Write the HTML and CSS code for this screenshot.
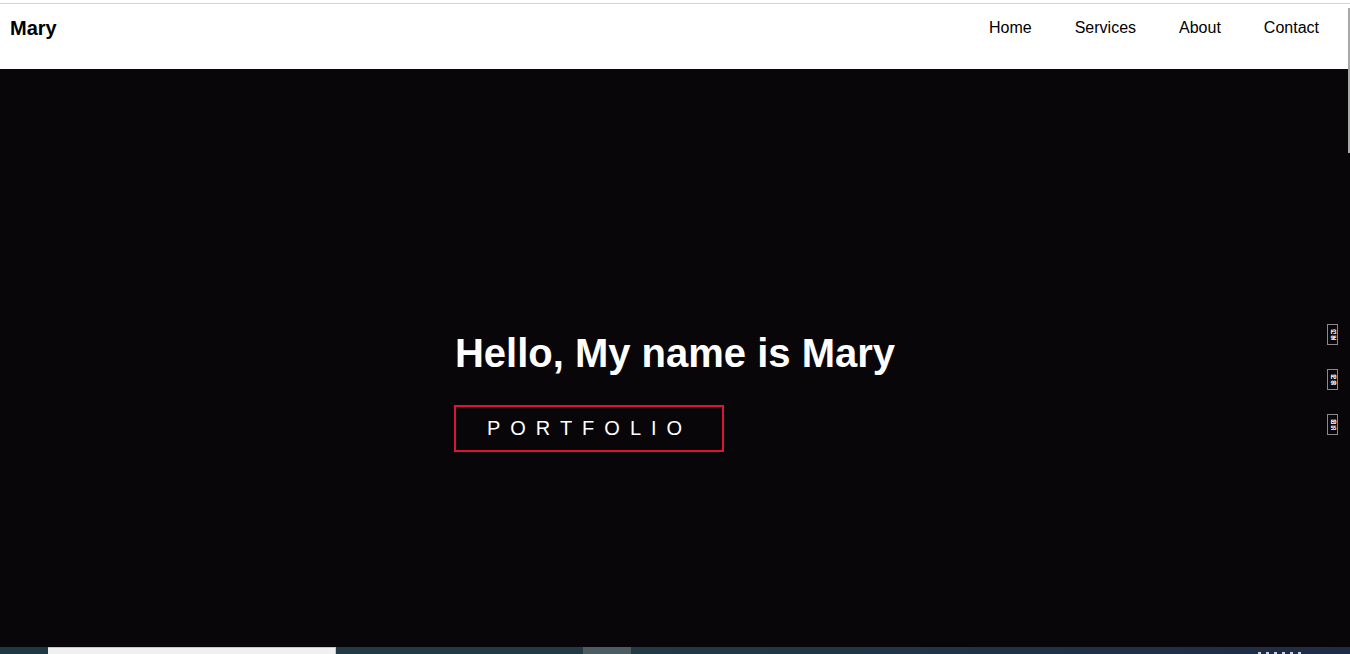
FILE: index.html
```html
<!DOCTYPE html>
<html lang="en">
<head>
<meta charset="utf-8">
<title>Mary</title>
<link rel="stylesheet" href="styles.css">
</head>
<body>
<header class="header">
  <div class="logo">Mary</div>
  <nav class="nav">
    <a href="#" class="nav-link">Home</a>
    <a href="#" class="nav-link">Services</a>
    <a href="#" class="nav-link">About</a>
    <a href="#" class="nav-link">Contact</a>
  </nav>
</header>
<section class="hero">
  <div class="hero-content">
    <h1 class="hero-title">Hello, My name is Mary</h1>
    <a href="#" class="btn">PORTFOLIO</a>
  </div>
  <div class="social">
    <span class="glyph"><span>F3</span><span>9E</span></span>
    <span class="glyph"><span>F0</span><span>99</span></span>
    <span class="glyph"><span>E0</span><span>55</span></span>
  </div>
</section>
<div class="taskbar">
  <div class="tb-left"></div>
  <div class="tb-search"></div>
  <div class="tb-mid"></div>
  <div class="tb-app"></div>
  <div class="tb-rest"><span class="tb-clock"></span></div>
</div>
<div class="scroll-thumb"></div>
</body>
</html>
```

FILE: styles.css
```css
* { box-sizing: border-box; }

html, body {
  margin: 0;
  padding: 0;
}

body {
  width: 1350px;
  height: 654px;
  overflow: hidden;
  padding-top: 3px;
  background: #ffffff;
  font-family: "Liberation Sans", Arial, sans-serif;
  color: #000;
  position: relative;
}

.header {
  height: 66px;
  border-top: 1px solid #d4d4d6;
  background: #fff;
  display: flex;
  justify-content: space-between;
  align-items: flex-start;
  padding: 0 31px 0 10px;
}

.logo {
  font-size: 20px;
  font-weight: bold;
  line-height: 23px;
  margin-top: 13px;
}

.nav {
  display: flex;
  gap: 43px;
  margin-top: 15px;
}

.nav-link {
  color: #000;
  text-decoration: none;
  font-size: 16px;
  line-height: 18px;
}

.hero {
  position: relative;
  height: 578px;
  background: #080608;
  display: flex;
  justify-content: center;
  padding-top: 261px;
}

.hero-content {
  display: flex;
  flex-direction: column;
  align-items: flex-start;
}

.hero-title {
  margin: 0;
  color: #fff;
  font-size: 40px;
  font-weight: bold;
  line-height: 46px;
}

.btn {
  margin-top: 29px;
  margin-left: -1px;
  border: 2px solid #dc143c;
  color: #fff;
  text-decoration: none;
  font-size: 20px;
  line-height: 23px;
  letter-spacing: 10px;
  padding: 10px 26px 10px 31px;
  width: 270px;
}

.social {
  position: absolute;
  right: 12px;
  top: 255px;
  display: flex;
  flex-direction: column;
  gap: 24px;
}

.glyph {
  width: 11px;
  height: 21px;
  border: 1px solid #8a8a8a;
  display: flex;
  flex-direction: column;
  align-items: center;
  justify-content: center;
  color: #fff;
  font-family: "DejaVu Sans Mono", monospace;
  font-size: 6px;
  font-weight: bold;
  line-height: 6px;
  letter-spacing: -1px;
  padding-left: 1px;
}

.taskbar {
  height: 7px;
  display: flex;
  background: #1f3942;
}

.tb-left { width: 48px; background: #1f3942; }
.tb-search { width: 288px; background: #f0f0f0; border-top: 1px solid #c8c8c8; border-right: 1px solid #c8c8c8; }
.tb-mid { width: 247px; background: #213a44; }
.tb-app { width: 48px; background: #4c5c62; }
.tb-rest {
  flex: 1;
  background: linear-gradient(90deg, #213a44, #1f2c48);
  position: relative;
}
.tb-clock {
  position: absolute;
  left: 627px;
  top: 5px;
  width: 44px;
  height: 2px;
  background: repeating-linear-gradient(90deg, #cfd4dc 0 3px, transparent 3px 8px);
}

.scroll-thumb {
  position: absolute;
  right: 0;
  top: 8px;
  width: 2px;
  height: 145px;
  background: #a9a9a9;
}
```
